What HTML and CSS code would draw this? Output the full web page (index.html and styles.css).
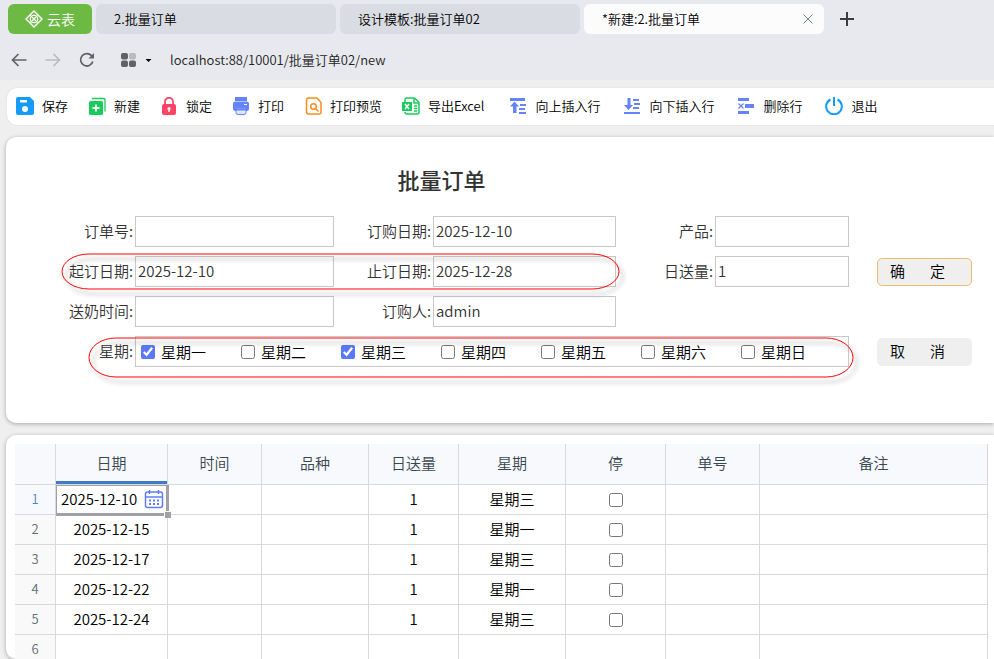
FILE: index.html
```html
<!DOCTYPE html>
<html lang="zh-CN">
<head>
  <meta charset="UTF-8">
  <meta name="viewport" content="width=device-width, initial-scale=1">
  <title>批量订单</title>
  <link rel="stylesheet" href="styles.css">
</head>
<body>

  <!-- 标签页和地址栏 -->
  <header class="header">
    <nav class="tabs">
      <button class="brand" type="button">
        <svg width="18" height="18" viewBox="0 0 18 18" fill="none" stroke="#fff" stroke-width="1.500" stroke-linejoin="round">
          <path d="M9 1 17 9 9 17 1 9z"/>
          <path d="M5 5l8 8M13 5l-8 8" stroke-width="1.300"/>
          <path d="M9 4.500v1.500M9 12v1.500M4.500 9H6M12 9h1.500M7 5.500h4M7 12.500h4M5.500 7v4M12.500 7v4" stroke-width=".9"/>
        </svg>
        云表
      </button>
      <div class="tab"><button class="tab-name" type="button">2.批量订单</button></div>
      <div class="tab"><button class="tab-name" type="button">设计模板:批量订单02</button></div>
      <div class="tab active">
        <button class="tab-name" type="button">*新建:2.批量订单</button>
        <button class="icon-btn" type="button" aria-label="关闭">
          <svg width="10" height="10" viewBox="0 0 10 10" stroke="#777d85"><path d="M.5.5l9 9M9.500.5l-9 9"/></svg>
        </button>
      </div>
      <button class="icon-btn add" type="button" aria-label="新标签页">
        <svg width="14" height="14" viewBox="0 0 14 14" stroke="#3c3c40" stroke-width="2"><path d="M7 0v14M0 7h14"/></svg>
      </button>
    </nav>
    <div class="address">
      <button class="icon-btn" type="button" aria-label="后退">
        <svg width="16" height="14" viewBox="0 0 16 14" fill="none" stroke="#5f6368" stroke-width="1.700"><path d="M15.500 7H1.500M7.500 1l-6 6 6 6"/></svg>
      </button>
      <button class="icon-btn" type="button" aria-label="前进">
        <svg width="16" height="14" viewBox="0 0 16 14" fill="none" stroke="#b9bbc0" stroke-width="1.700"><path d="M.5 7h14M8.500 1l6 6-6 6"/></svg>
      </button>
      <button class="icon-btn" type="button" aria-label="刷新">
        <svg width="16" height="16" viewBox="0 0 16 16" fill="none" stroke="#5f6368" stroke-width="1.800"><path d="M13.800 9.500A6.200 6.200 0 1 1 12.500 3.700L14 5.300"/><path d="M15 1v5.500H9.500z" fill="#5f6368" stroke="none"/></svg>
      </button>
      <button class="icon-btn apps" type="button" aria-label="应用">
        <svg width="32" height="16" viewBox="0 0 32 16" fill="#5f6368">
          <rect x="1" y="1" width="7" height="6.500" rx="2"/>
          <rect x="9" y="1" width="7" height="6.500" rx="2" fill="#b9bbc0"/>
          <rect x="1" y="8.500" width="7" height="6.500" rx="2"/>
          <rect x="9" y="8.500" width="7" height="6.500" rx="2"/>
          <path d="M25.500 7h6l-3 3z" fill="#000"/>
        </svg>
      </button>
      <input class="url" type="text" aria-label="地址" value="localhost:88/10001/批量订单02/new">
    </div>
  </header>

  <!-- 工具栏 -->
  <div class="toolbar">
    <button class="tool" type="button">
      <svg viewBox="0 0 18 18"><path d="M2 0h12l4 4v12a2 2 0 0 1-2 2H2a2 2 0 0 1-2-2V2a2 2 0 0 1 2-2z" fill="#149cf8"/><path d="M4 3h7v2.500H4z" fill="#fff"/><circle cx="9" cy="12" r="3" fill="#fff"/></svg>
      保存
    </button>
    <button class="tool" type="button">
      <svg viewBox="0 0 18 18"><path d="M4 1.500h11.500q1.500 0 1.500 1.500V14.500" fill="none" stroke="#18cc5c" stroke-width="1.300"/><rect x="1" y="4" width="14" height="14" rx="1.500" fill="#18cc5c"/><path d="M8 7.500v7M4.500 11h7" stroke="#fff" stroke-width="1.800"/></svg>
      新建
    </button>
    <button class="tool" type="button">
      <svg viewBox="0 0 18 18"><path d="M5 8V4.500a4 3.700 0 0 1 8 0V8" fill="none" stroke="#ff4365" stroke-width="1.800"/><rect x="2" y="7" width="14" height="11" rx="2" fill="#ff4365"/><circle cx="9" cy="11.500" r="1.600" fill="#fff"/><path d="M9 12v3" stroke="#fff" stroke-width="1.400"/></svg>
      锁定
    </button>
    <button class="tool" type="button">
      <svg viewBox="0 0 18 18"><path d="M3 0h12v4H3z" fill="#6584fb"/><rect x="1" y="4.500" width="16" height="9.500" rx="2.500" fill="#6584fb"/><path d="M12 7.500h3" stroke="#fff"/><path d="M4 11h10v4.500q0 2-2 2H6q-2 0-2-2z" fill="#dfe5ff" stroke="#6584fb"/><path d="M4 12.500h10" stroke="#6584fb" stroke-width="2"/></svg>
      打印
    </button>
    <button class="tool" type="button">
      <svg viewBox="0 0 18 18" fill="none" stroke="#fa8d20" stroke-width="1.500"><path d="M4.500 1h8.500l4 4.500V15q0 2-2 2H4.500q-2 0-2-2V3q0-2 2-2z"/><circle cx="9.500" cy="9.500" r="2.800"/><path d="M11.500 11.500l3 3"/></svg>
      打印预览
    </button>
    <button class="tool" type="button">
      <svg viewBox="0 0 18 18" fill="none" stroke="#18cc5c" stroke-width="1.500"><path d="M3 5V2.500Q3 1 4.500 1h8L17 5.500V15q0 2-2 2H5q-2 0-2-2"/><path d="M12 1.500V6h5M12 9h3M12 11.500h3M12 14h3"/><rect y="5" width="10" height="9" fill="#18cc5c" stroke="none"/><path d="M3 7l4 5M7 7l-4 5" stroke="#fff"/></svg>
      导出Excel
    </button>
    <div class="row-tools">
      <button class="tool" type="button">
        <svg viewBox="0 0 18 18"><path d="M1 1h15v3H1zM11 7h6v2h-6zM10 11h6v2h-6zM10 15h7v2h-7zM5.500 4.500 10 9.500H7.500V16H4V9.500H1z" fill="#6584fb"/></svg>
        向上插入行
      </button>
      <button class="tool" type="button">
        <svg viewBox="0 0 18 18"><path d="M1 15h16v2H1zM10 2h6v2h-6zM11 6h6v2h-6zM10 10h6v2h-6zM4.500 1h3v7H10l-4.500 5L1 8h3.500z" fill="#6584fb"/></svg>
        向下插入行
      </button>
      <button class="tool" type="button">
        <svg viewBox="0 0 18 18"><path d="M1 1h11v3H1zM8 7h9v4H8zM1 14h11v3H1z" fill="#6584fb"/><path d="M1.500 6.500l5 5M6.500 6.500l-5 5" stroke="#6584fb" stroke-width="1.300"/></svg>
        删除行
      </button>
      <button class="tool" type="button">
        <svg viewBox="0 0 18 18" fill="none" stroke="#149cf8" stroke-width="2"><path d="M5.500 2.500a7.800 7.800 0 1 0 7 0M9 0v9"/></svg>
        退出
      </button>
    </div>
  </div>

  <!-- 订单表头 -->
  <form class="card order">
    <h1>批量订单</h1>

    <label class="first" for="orderNo">订单号:</label>
    <input id="orderNo" type="text">
    <label for="orderDate">订购日期:</label>
    <input id="orderDate" type="text" value="2025-12-10">
    <label for="product">产品:</label>
    <input id="product" type="text">

    <label class="first" for="startDate">起订日期:</label>
    <input id="startDate" type="text" value="2025-12-10">
    <label for="endDate">止订日期:</label>
    <input id="endDate" type="text" value="2025-12-28">
    <label for="amount">日送量:</label>
    <input id="amount" type="text" value="1">
    <button class="btn primary" type="button">确　   定</button>

    <label class="first" for="milkTime">送奶时间:</label>
    <input id="milkTime" type="text">
    <label for="buyer">订购人:</label>
    <input id="buyer" type="text" value="admin">

    <span class="label first" id="weekLabel">星期:</span>
    <div class="weekdays" role="group" aria-labelledby="weekLabel">
      <label><input type="checkbox" checked>星期一</label>
      <label><input type="checkbox">星期二</label>
      <label><input type="checkbox" checked>星期三</label>
      <label><input type="checkbox">星期四</label>
      <label><input type="checkbox">星期五</label>
      <label><input type="checkbox">星期六</label>
      <label><input type="checkbox">星期日</label>
    </div>
    <button class="btn" type="button">取　   消</button>

    <!-- 红圈标注 -->
    <svg class="mark mark-dates"><rect width="100%" height="100%" rx="27" ry="18"/></svg>
    <svg class="mark mark-week"><rect width="100%" height="100%" rx="27" ry="20"/></svg>
  </form>

  <!-- 明细表 -->
  <section class="card sheet">
    <table>
      <colgroup>
        <col class="c-num"><col class="c-date"><col class="c-time"><col class="c-kind"><col class="c-amount"><col class="c-kind"><col class="c-stop"><col class="c-time"><col>
      </colgroup>
      <thead>
        <tr><th></th><th class="current">日期</th><th>时间</th><th>品种</th><th>日送量</th><th>星期</th><th>停</th><th>单号</th><th>备注</th></tr>
      </thead>
      <tbody>
        <tr class="current">
          <th>1</th>
          <td class="selected">
            <div class="editor">
              <span>2025-12-10</span>
              <button class="icon-btn" type="button" aria-label="选择日期">
                <svg width="20" height="20" viewBox="0 0 20 20" fill="none" stroke="#5f7dfb" stroke-width="1.500"><rect x="1.500" y="3" width="17" height="15.500" rx="2"/><path d="M1.500 8h17M5.500 1v4M14.500 1v4"/><path d="M5 11.500h10.500M5 15h10.500" stroke-width="1.800" stroke-dasharray="2 2"/></svg>
              </button>
            </div>
          </td>
          <td></td><td></td><td>1</td><td>星期三</td><td><input type="checkbox" aria-label="停 1"></td><td></td><td></td>
        </tr>
        <tr><th>2</th><td>2025-12-15</td><td></td><td></td><td>1</td><td>星期一</td><td><input type="checkbox" aria-label="停 2"></td><td></td><td></td></tr>
        <tr><th>3</th><td>2025-12-17</td><td></td><td></td><td>1</td><td>星期三</td><td><input type="checkbox" aria-label="停 3"></td><td></td><td></td></tr>
        <tr><th>4</th><td>2025-12-22</td><td></td><td></td><td>1</td><td>星期一</td><td><input type="checkbox" aria-label="停 4"></td><td></td><td></td></tr>
        <tr><th>5</th><td>2025-12-24</td><td></td><td></td><td>1</td><td>星期三</td><td><input type="checkbox" aria-label="停 5"></td><td></td><td></td></tr>
        <tr><th>6</th><td></td><td></td><td></td><td></td><td></td><td></td><td></td><td></td></tr>
      </tbody>
    </table>
  </section>

</body>
</html>
```
FILE: styles.css
```css
* {
  box-sizing: border-box;
}

body {
  margin: 0;
  height: 100vh;
  display: flex;
  flex-direction: column;
  overflow: hidden;
  background: #efefef;
  color: #000;
  font-family: "Noto Sans CJK SC", sans-serif;
  font-size: 15px;
  font-weight: 350;
  line-height: 20px;
}

button,
input {
  font: inherit;
  color: inherit;
}

button {
  padding: 0;
  border: none;
  background: none;
  cursor: pointer;
}

svg {
  display: block;
  flex: none;
}

input[type="checkbox"] {
  width: 14px;
  height: 14px;
  margin: 0;
  accent-color: #5b78fa;
}

.icon-btn {
  display: flex;
  align-items: center;
  justify-content: center;
}

/* 顶部 */
.header {
  flex: none;
  background: #e8e9ee;
}

.tabs {
  display: flex;
  gap: 4px;
  padding: 4px 8px 0;
  font-size: 13px;
}

.brand {
  flex: none;
  width: 84px;
  height: 30px;
  display: flex;
  align-items: center;
  justify-content: center;
  gap: 4px;
  border-radius: 6px;
  background: #6cb944;
  color: #fff;
  font-size: 14px;
}

.tab {
  flex: 0 1 240px;
  height: 30px;
  display: flex;
  align-items: center;
  justify-content: space-between;
  padding: 0 11px 0 18px;
  border-radius: 6px;
  background: #d9dce3;
}

.tab.active {
  background: #fcfcfd;
}

.tab-name {
  white-space: nowrap;
}

.add {
  width: 38px;
}

.address {
  display: flex;
  align-items: center;
  gap: 18px;
  height: 46px;
  padding: 6px 11px 0;
}

.apps {
  margin-left: 7px;
}

.url {
  flex: 1;
  padding: 0;
  border: none;
  outline: none;
  background: none;
  color: #222;
  font-size: 13px;
}

/* 工具栏 */
.toolbar {
  flex: none;
  display: flex;
  align-items: center;
  gap: 20px;
  height: 37px;
  margin: 8px 0 12px 7px;
  padding: 0 9px 2px;
  border-radius: 10px 0 0 10px;
  background: #fff;
  box-shadow: 0 0 2px rgba(0, 0, 0, 0.1);
}

.row-tools {
  display: flex;
  gap: 23px;
  margin-left: 5px;
}

.tool {
  display: flex;
  align-items: center;
  gap: 8px;
  font-size: 13px;
  white-space: nowrap;
}

.tool svg {
  width: 18px;
  height: 18px;
}

.card {
  margin-left: 6px;
  border-radius: 10px 0 0 10px;
  background: #fff;
  box-shadow: 0 1px 4px rgba(0, 0, 0, 0.3);
}

/* 表单 */
.order {
  position: relative;
  flex: none;
  display: grid;
  grid-template-columns: 129px 199fr 99px 183fr 99px 134fr 123px;
  grid-template-rows: 42px;
  grid-auto-rows: 31px;
  row-gap: 9px;
  align-items: center;
  margin-bottom: 12px;
  padding: 28px 22px 56px 0;
  color: #333;
}

.order h1 {
  grid-column: 1 / 7;
  align-self: start;
  margin: 0;
  padding-left: 28px;
  font-size: 22px;
  font-weight: 500;
  line-height: 28px;
  text-align: center;
}

.order > label,
.label {
  padding: 0 2px 2px 0;
  text-align: right;
}

.order .first {
  grid-column: 1;
}

.order input[type="text"] {
  width: 100%;
  height: 31px;
  padding: 0 2px 2px;
  border: 1px solid #c8c8c8;
  border-radius: 0;
  background: #fff;
}

.btn {
  height: 28px;
  margin-left: 28px;
  padding: 0 0 2px 12px;
  border: 1px solid #efefef;
  border-radius: 5px;
  background: #efefef;
  color: #000;
  text-align: left;
  white-space: pre;
}

.btn.primary {
  border-color: #f0b867;
}

.weekdays {
  grid-column: 2 / 7;
  display: flex;
  align-items: center;
  height: 31px;
  padding-left: 5px;
  border: 1px solid #c8c8c8;
  color: #000;
}

.weekdays label {
  width: 100px;
  display: flex;
  align-items: center;
  gap: 6px;
}

.mark {
  position: absolute;
  overflow: visible;
  pointer-events: none;
  fill: none;
  stroke: #f00;
  filter: drop-shadow(4px 5px 2px rgba(0, 0, 0, 0.4));
}

.mark-dates {
  top: 117px;
  left: 56px;
  width: calc(100% - 431px);
  height: 35px;
}

.mark-week {
  top: 201px;
  left: 83px;
  width: calc(100% - 224px);
  height: 39px;
}

/* 明细 */
.sheet {
  flex: 1;
  min-height: 0;
  padding: 9px 6px 0 9px;
  overflow: hidden;
}

table {
  width: 100%;
  table-layout: fixed;
  border-collapse: separate;
  border-spacing: 0;
}

.c-num { width: 41px; }
.c-date { width: 112px; }
.c-time { width: 94px; }
.c-kind { width: 107px; }
.c-amount { width: 90px; }
.c-stop { width: 100px; }

th,
td {
  position: relative;
  height: 30px;
  padding: 0 0 2px;
  border-right: 1px solid #d9d9db;
  border-bottom: 1px solid #d9d9db;
  font-weight: inherit;
  text-align: center;
}

thead th {
  height: 41px;
  background: #f7f9fd;
  color: #37474f;
}

thead th.current {
  box-shadow: inset 0 -3px #3f7bc6;
}

tbody th {
  background: #f9f9f9;
  color: #5d6d75;
  font-size: 13px;
}

tbody .current th {
  background: #f7f9fd;
  color: #4a86c8;
}

td input[type="checkbox"] {
  display: block;
  margin: 2px auto 0;
}

.editor {
  display: flex;
  align-items: center;
  justify-content: space-between;
  padding: 0 3px 0 5px;
}

/* 选中单元格的边框和拖动点 */
.selected::before {
  content: '';
  position: absolute;
  inset: 0 -2px -2px 0;
  border: 1px solid #a0a0a5;
  border-width: 1px 3px 3px 1px;
  pointer-events: none;
  z-index: 1;
}

.selected::after {
  content: '';
  position: absolute;
  right: -4px;
  bottom: -4px;
  width: 6px;
  height: 6px;
  border: 1px solid #fff;
  border-width: 1px 0 0 1px;
  background: #a0a0a5;
  z-index: 2;
}
```
